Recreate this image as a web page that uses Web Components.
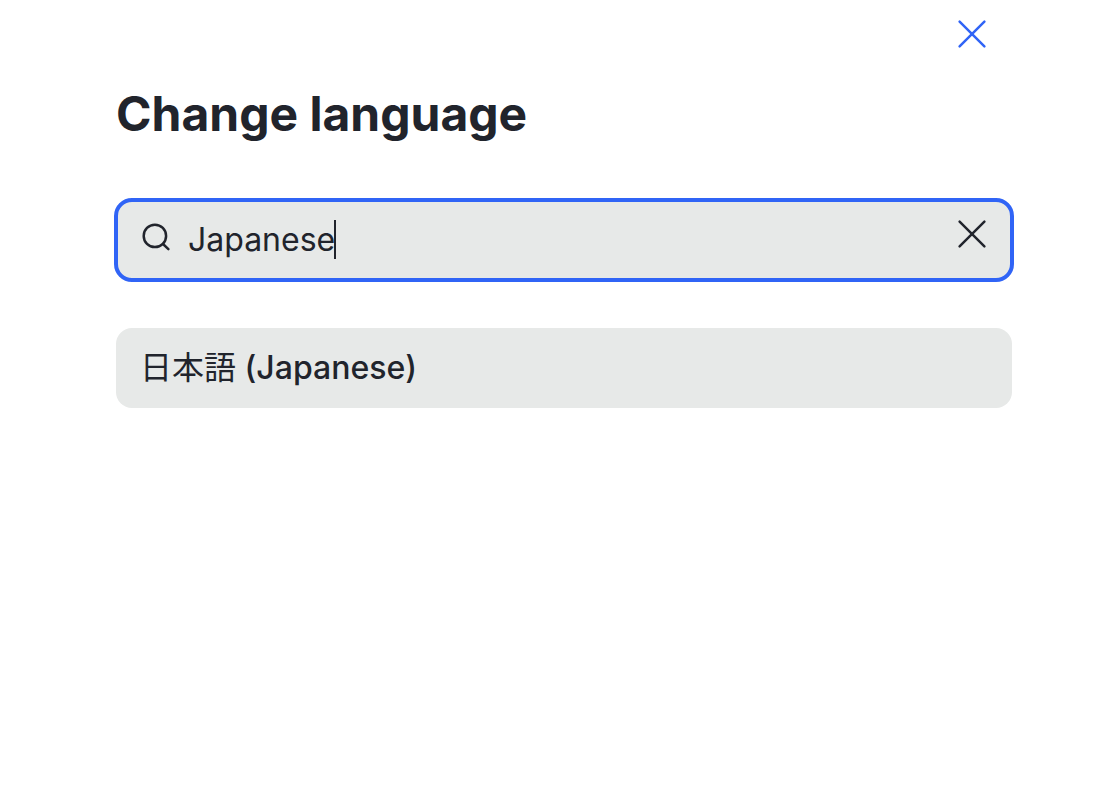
<!DOCTYPE html>
<html lang="en">
<head>
<meta charset="utf-8">
<meta name="viewport" content="width=device-width, initial-scale=1">
<title>Change language</title>
<style>
  body {
    margin: 0;
    background: #fff;
    color: #21242c;
    font-family: Inter, "Noto Sans CJK JP", sans-serif;
    --accent: #3064f6;
    --surface: #e7e9e8;
  }
  .native { font-weight: 400; }
</style>
</head>
<body>
<language-dialog heading="Change language">
  <icon-button slot="close" label="Close" tone="accent"></icon-button>
  <search-field value="Japanese" label="Search languages"></search-field>
  <language-option><span class="native" lang="ja">日本語</span> (Japanese)</language-option>
</language-dialog>

<script>
class BaseElement extends HTMLElement {
  constructor() {
    super();
    this.attachShadow({ mode: "open" });
  }
  connectedCallback() {
    this.shadowRoot.innerHTML = this.render();
  }
}

class IconButton extends BaseElement {
  render() {
    return `<style>
      :host { display: block; color: inherit; }
      :host([tone="accent"]) { color: var(--accent); }
      button { display: flex; align-items: center; justify-content: center; width: 48px; height: 48px; margin: 0; padding: 0; border: 0; background: none; color: inherit; cursor: pointer; }
      svg { display: block; width: 32px; height: 32px; }
    </style>
    <button type="button" aria-label="${this.getAttribute("label")}">
      <svg viewBox="0 0 32 32" fill="none" stroke="currentColor" stroke-width="2.5" stroke-linecap="round" aria-hidden="true"><path d="M3.6 3.6 28.4 28.4M28.4 3.6 3.6 28.4"/></svg>
    </button>`;
  }
}

class SearchField extends BaseElement {
  render() {
    const label = this.getAttribute("label");
    return `<style>
      :host { display: block; }
      .box { display: flex; align-items: flex-start; box-sizing: border-box; height: 84px; margin: 0 -2px; padding: 8px 14px 0 24px; border: 4px solid var(--accent); border-radius: 18px; background: var(--surface); }
      label { flex: 1; display: flex; min-width: 0; padding-top: 10px; cursor: text; }
      svg { flex: none; width: 32px; height: 32px; margin-right: 14px; }
      input { field-sizing: content; min-width: 0; max-width: 100%; height: 40px; margin: 0; padding: 0; border: 0; outline: 0; background: none; color: inherit; font: 400 32px/40px Inter, "Noto Sans CJK JP", sans-serif; caret-color: transparent; }
      .caret { flex: none; width: 2px; height: 39px; margin-left: -1px; background: currentColor; }
    </style>
    <div class="box">
      <label>
        <svg viewBox="0 0 32 32" fill="none" stroke="currentColor" stroke-width="2.5" stroke-linecap="round" aria-hidden="true"><circle cx="12.9" cy="15.9" r="11.2"/><path d="M21 24 26.4 29.1"/></svg>
        <input type="text" aria-label="${label}" value="${this.getAttribute("value")}">
        <span class="caret"></span>
      </label>
      <icon-button label="Clear search"></icon-button>
    </div>`;
  }
}

class LanguageOption extends BaseElement {
  render() {
    return `<style>
      :host { display: block; }
      button { display: block; box-sizing: border-box; width: 100%; min-height: 80px; margin: 0; padding: 20px 24px; border: 0; border-radius: 16px; background: var(--surface); color: inherit; font: 500 32px/40px Inter, "Noto Sans CJK JP", sans-serif; text-align: left; cursor: pointer; }
    </style>
    <button type="button"><slot></slot></button>`;
  }
}

class LanguageDialog extends BaseElement {
  render() {
    return `<style>
      :host { display: block; padding: 10px 97px 40px 116px; }
      header { display: flex; justify-content: flex-end; padding-right: 16px; }
      h1 { margin: 24px 0 52px; font-size: 48px; line-height: 64px; font-weight: 700; }
      .content { display: flex; flex-direction: column; gap: 46px; }
    </style>
    <header><slot name="close"></slot></header>
    <main>
      <h1>${this.getAttribute("heading")}</h1>
      <div class="content"><slot></slot></div>
    </main>`;
  }
}

customElements.define("icon-button", IconButton);
customElements.define("search-field", SearchField);
customElements.define("language-option", LanguageOption);
customElements.define("language-dialog", LanguageDialog);
</script>
</body>
</html>
